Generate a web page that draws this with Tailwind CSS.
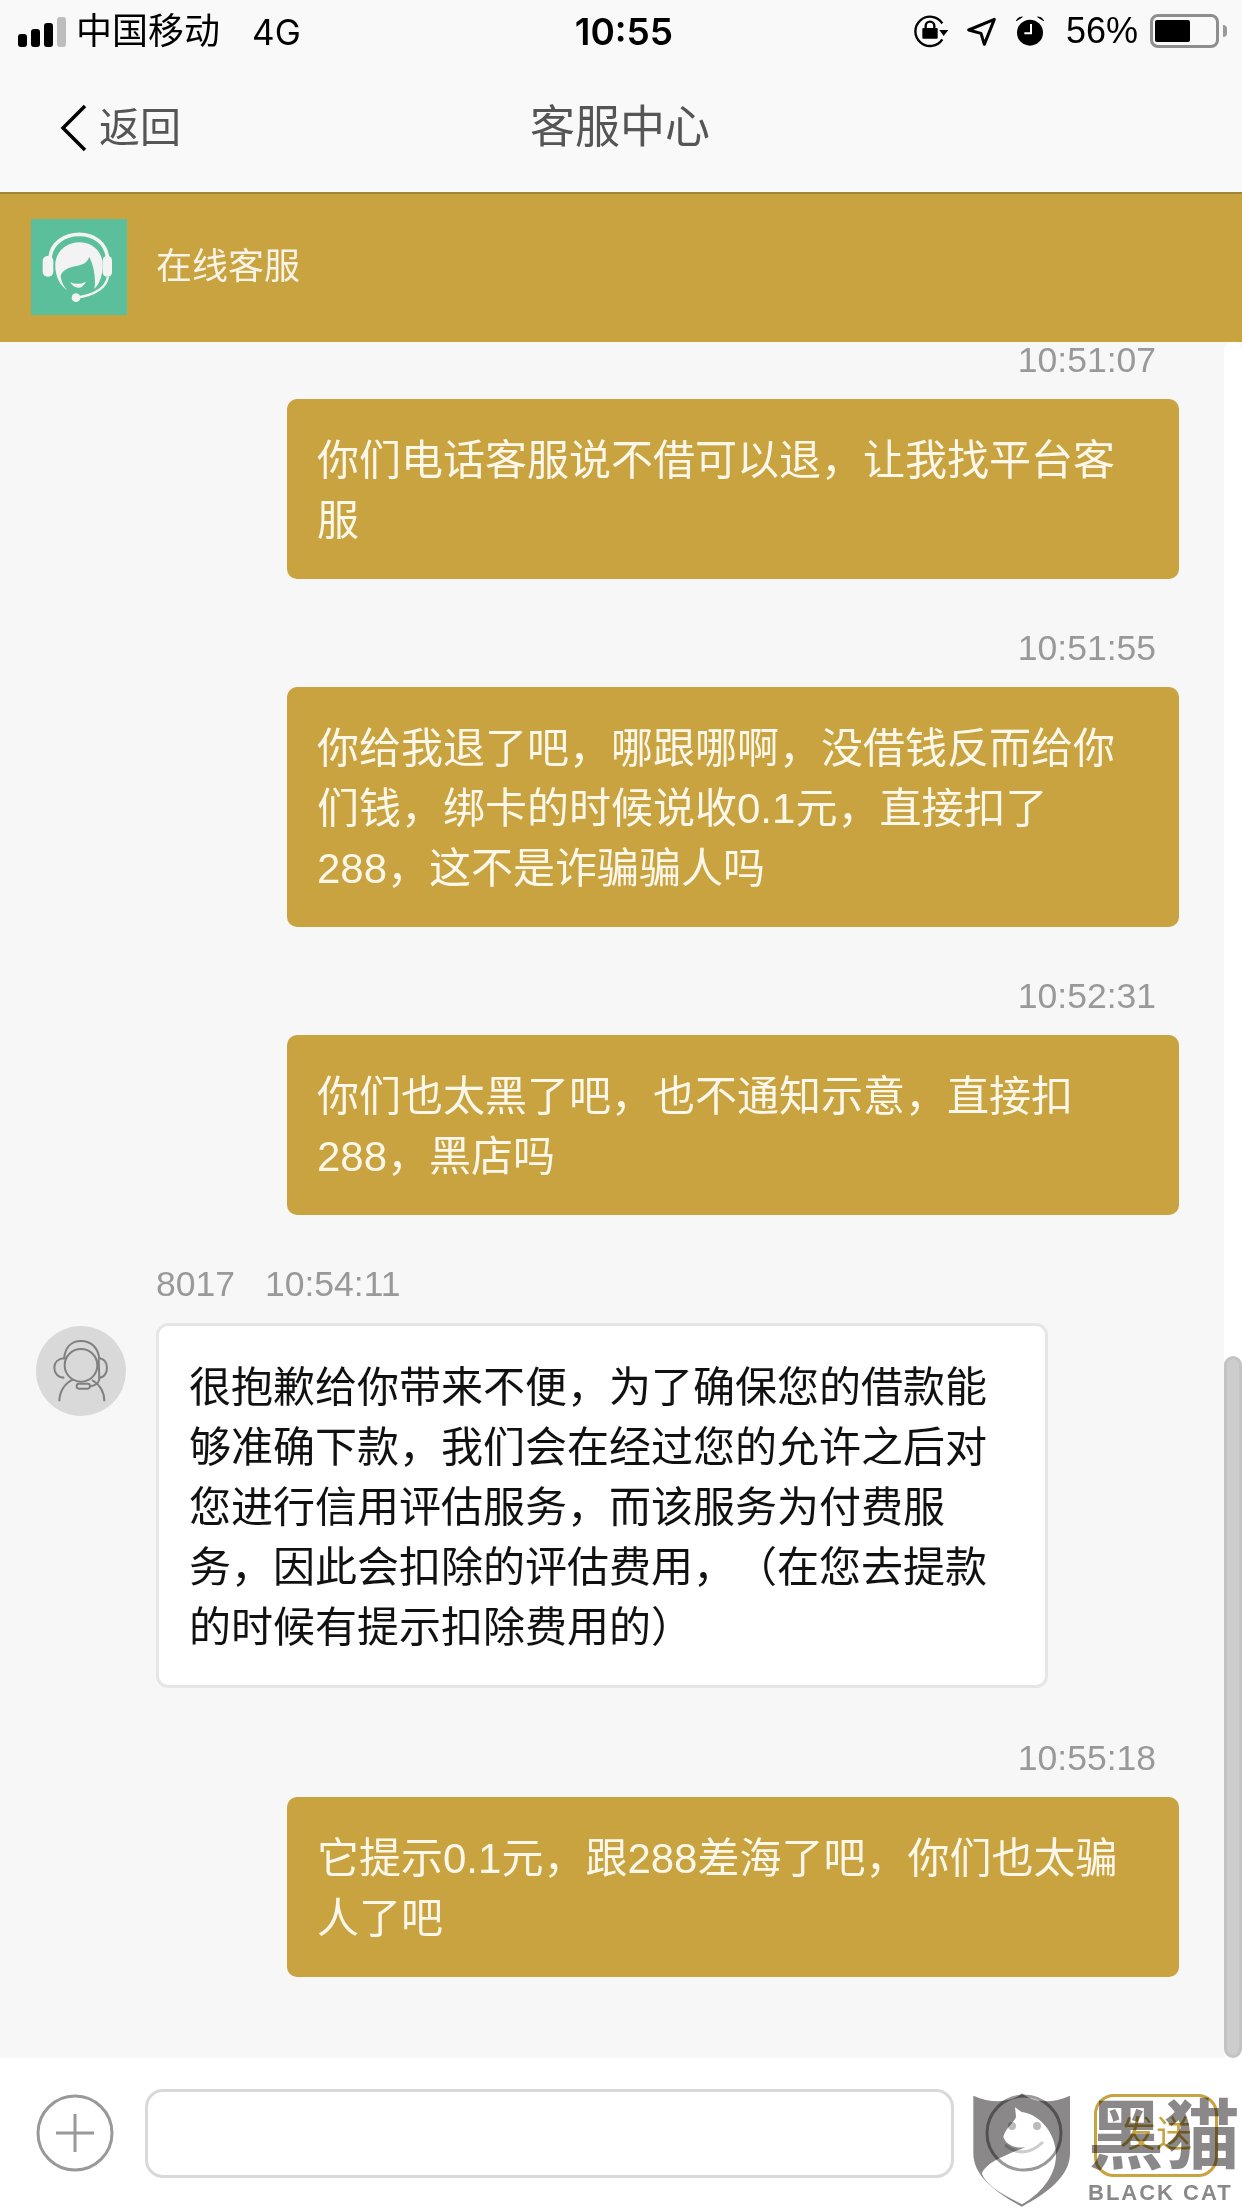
<!DOCTYPE html>
<html lang="zh">
<head>
  <meta charset="UTF-8">
  <meta name="viewport" content="width=device-width, initial-scale=1.0">
  <title>客服中心</title>
  <script src="https://cdn.jsdelivr.net/npm/@tailwindcss/browser@4"></script>
</head>
<body class="m-0 bg-white font-['Liberation_Sans','Noto_Sans_CJK_SC',sans-serif] [text-spacing-trim:space-all]">
  <div class="relative flex h-[2208px] w-[1242px] flex-col overflow-hidden">

    <!-- status bar -->
    <div class="flex h-[60px] shrink-0 items-center bg-[#f9f9f9] pl-[18px] pr-[15px] pt-[2px] text-black">
      <div class="flex h-[32px] w-[48px] items-end gap-[4px]">
        <span class="h-[13px] w-[9px] rounded-[3px] bg-black"></span>
        <span class="h-[18px] w-[9px] rounded-[3px] bg-black"></span>
        <span class="h-[24px] w-[9px] rounded-[3px] bg-black"></span>
        <span class="h-[30px] w-[9px] rounded-[3px] bg-[#bdbdbd]"></span>
      </div>
      <span class="ml-[10px] pt-[1px] text-[36px] leading-[40px]">中国移动</span>
      <span class="ml-[32px] pt-[1px] font-['Inter','Noto_Sans_CJK_SC',sans-serif] text-[35px] leading-[40px]">4G</span>
      <span class="ml-[274px] pt-[1px] font-['Inter',sans-serif] text-[37px] font-semibold leading-[40px]">10:55</span>
      <div class="ml-auto flex items-center">
        <svg class="h-[50px] w-[150px]" viewBox="0 0 450 150" fill="none">
          <path d="M112 52 A44 44 0 1 0 112 100" stroke="#000" stroke-width="7"/>
          <path d="M103 72 L130 72 L116 90 Z" fill="#000"/>
          <rect x="52" y="66" width="46" height="32" rx="3" fill="#000"/>
          <path d="M62 68 V60 A13 13 0 0 1 88 60 V68" stroke="#000" stroke-width="7"/>
          <path d="M268 40 L191 72 L228 82 L238 115 Z" stroke="#000" stroke-width="9" stroke-linejoin="round"/>
          <circle cx="375" cy="80" r="39" fill="#000"/>
          <path d="M378 54 V82 H358" stroke="#fff" stroke-width="6"/>
          <path d="M334 44 Q340 32 352 33 Z" fill="#000" stroke="#000" stroke-width="3"/>
          <path d="M416 44 Q410 32 398 33 Z" fill="#000" stroke="#000" stroke-width="3"/>
        </svg>
        <span class="ml-[11px] text-[36px] leading-[40px]">56%</span>
        <div class="ml-[12px] flex items-center">
          <div class="flex h-[34px] w-[69px] items-center rounded-[8px] border-[3px] border-[#8e8e8e] pl-[2px]">
            <div class="h-[22px] w-[35px] rounded-[2px] bg-black"></div>
          </div>
          <div class="ml-[4px] h-[12px] w-[4px] rounded-r-full bg-[#9a9a9a]"></div>
        </div>
      </div>
    </div>

    <!-- nav -->
    <div class="grid h-[132px] shrink-0 grid-cols-[1fr_auto_1fr] items-center bg-[#f9f9f9] pt-[3px]">
      <div class="flex items-center pl-[60px]">
        <svg class="h-[48px] w-[28px]" viewBox="0 0 28 48" fill="none">
          <path d="M25 2 L3 24 L25 46" stroke="#000" stroke-width="3.5"/>
        </svg>
        <span class="ml-[11px] text-[41px] leading-[50px] text-[#555]">返回</span>
      </div>
      <div class="pr-[2px] text-[45px] leading-[50px] text-[#555]">客服中心</div>
      <div></div>
    </div>

    <!-- service header -->
    <div class="flex h-[150px] shrink-0 items-center border-t-2 border-[#a08536] bg-[#c8a340] pb-[2px] pl-[31px]">
      <div class="flex h-[96px] w-[96px] items-center justify-center bg-[#5bbf9b]">
        <svg class="h-[96px] w-[96px]" viewBox="15 22 288 288" fill="none">
          <path d="M72 140 C75 95 115 68 160 68 C205 68 240 95 245 140" stroke="#f3f3f3" stroke-width="11"/>
          <rect x="50" y="133" width="32" height="62" rx="15" fill="#f3f3f3"/>
          <rect x="230" y="133" width="28" height="62" rx="13" fill="#f3f3f3"/>
          <path d="M125 236 C100 222 86 190 88 155 C92 115 125 92 160 92 C200 92 230 120 230 160 C230 190 222 215 205 232 C210 205 205 165 190 135 C182 160 160 160 140 165 C118 170 100 185 105 200 C108 215 115 228 125 236 Z" fill="#f3f3f3"/>
          <path d="M133 212 Q157 222 180 210 Q170 230 155 228 Q140 227 133 212 Z" fill="#f3f3f3"/>
          <path d="M246 195 C240 228 205 250 150 258" stroke="#f3f3f3" stroke-width="7"/>
          <circle cx="150" cy="258" r="13" fill="#f3f3f3"/>
        </svg>
      </div>
      <span class="ml-[29px] text-[36px] leading-[40px] text-[#f7f3e6]">在线客服</span>
    </div>

    <!-- chat list -->
    <div class="relative min-h-0 flex-1 bg-[#f7f7f7]">
      <div class="absolute inset-y-0 right-0 w-[18px] rounded-t-[9px] bg-white">
        <div class="absolute bottom-0 left-0 right-0 top-[1014px] rounded-[9px] border-[3px] border-[#c3c3c3] bg-[#cdcdcd]"></div>
      </div>

      <div class="-mt-[3px] flex flex-col pl-[287px] pr-[63px]">
        <div class="pr-[23px] text-right text-[35.5px] leading-[42px] text-[#999]">10:51:07</div>
        <div class="mt-[18px] rounded-[10px] bg-[#c8a340] px-[30px] pb-[28px] pt-[32px] text-[42px] leading-[60px] text-[#fbf7ea]">
          你们电话客服说不借可以退，让我找平台客<br>服
        </div>

        <div class="mt-[48px] pr-[23px] text-right text-[35.5px] leading-[42px] text-[#999]">10:51:55</div>
        <div class="mt-[18px] rounded-[10px] bg-[#c8a340] px-[30px] pb-[28px] pt-[32px] text-[42px] leading-[60px] text-[#fbf7ea]">
          你给我退了吧，哪跟哪啊，没借钱反而给你<br>们钱，绑卡的时候说收0.1元，直接扣了<br>288，这不是诈骗骗人吗
        </div>

        <div class="mt-[48px] pr-[23px] text-right text-[35.5px] leading-[42px] text-[#999]">10:52:31</div>
        <div class="mt-[18px] rounded-[10px] bg-[#c8a340] px-[30px] pb-[28px] pt-[32px] text-[42px] leading-[60px] text-[#fbf7ea]">
          你们也太黑了吧，也不通知示意，直接扣<br>288，黑店吗
        </div>

        <!-- agent reply -->
        <div class="-ml-[131px] mt-[48px] flex flex-col">
          <div class="flex text-[35.5px] leading-[42px] text-[#999]">
            <span>8017</span>
            <span class="ml-[30px]">10:54:11</span>
          </div>
          <div class="mt-[18px] flex items-start">
            <div class="mt-[3px] -ml-[120px] h-[90px] w-[90px] shrink-0 rounded-full bg-[#d9d9d9]">
              <svg class="h-[90px] w-[90px]" viewBox="0 0 270 270" fill="none" stroke="#808080" stroke-width="6">
                <circle cx="135" cy="118" r="49"/>
                <path d="M84 100 C87 65 105 45 135 45 C165 45 187 65 190 100"/>
                <path d="M85 96 C65 98 55 110 55 125 C55 140 65 155 85 155"/>
                <path d="M186 96 C205 98 213 110 213 125 C213 140 205 155 188 155"/>
                <path d="M188 100 L190 160 C188 172 175 180 162 181"/>
                <rect x="122" y="173" width="40" height="15" rx="7"/>
                <path d="M70 226 C70 195 88 170 112 160"/>
                <path d="M205 226 C205 200 195 178 168 162"/>
              </svg>
            </div>
            <div class="ml-[30px] h-[365px] w-[892px] rounded-[12px] border-[3px] border-[#e6e6e6] bg-white px-[30px] pb-[29px] pt-[32px] text-[42px] leading-[60px] text-[#111]">
              很抱歉给你带来不便，为了确保您的借款能<br>够准确下款，我们会在经过您的允许之后对<br>您进行信用评估服务，而该服务为付费服<br>务，因此会扣除的评估费用，（在您去提款<br>的时候有提示扣除费用的）
            </div>
          </div>
        </div>

        <div class="mt-[49px] pr-[23px] text-right text-[35.5px] leading-[42px] text-[#999]">10:55:18</div>
        <div class="mt-[18px] rounded-[10px] bg-[#c8a340] px-[30px] pb-[28px] pt-[32px] text-[42px] leading-[60px] text-[#fbf7ea]">
          它提示0.1元，跟288差海了吧，你们也太骗<br>人了吧
        </div>
      </div>
    </div>

    <!-- input bar -->
    <div class="flex h-[150px] shrink-0 items-center bg-white pl-[36px]">
      <svg class="h-[78px] w-[78px] shrink-0" viewBox="0 0 78 78" fill="none" stroke="#999" stroke-width="3">
        <circle cx="39" cy="39" r="37"/>
        <path d="M20 39 H58 M39 20 V58"/>
      </svg>
      <div class="ml-[31px] h-[89px] w-[809px] rounded-[18px] border-[3px] border-[#d9d9d9] bg-white"></div>
      <svg class="ml-[31px] h-[78px] w-[78px] shrink-0" viewBox="0 0 78 78" fill="none" stroke="#999" stroke-width="3">
        <circle cx="39" cy="39" r="37"/>
        <circle cx="27" cy="32" r="4" fill="#bbb" stroke="none"/>
        <circle cx="52" cy="32" r="4" fill="#bbb" stroke="none"/>
        <path d="M20 51 Q39 66 58 48" stroke="#ccc"/>
      </svg>
      <div class="ml-[31px] mt-[4px] flex h-[83px] w-[124px] items-center justify-center rounded-[20px] border-[3px] border-[#c8a340] text-[36px] text-[#c8a340]">发送</div>
    </div>

    <!-- watermark over the bar -->
    <svg class="pointer-events-none absolute left-[900px] top-[2030px] h-[178px] w-[342px] mix-blend-multiply" viewBox="0 0 1026 534">
      <path fill-rule="evenodd" fill="#8a8889" d="M366 190 C340 215 280 225 220 197 L220 370 C220 440 290 490 366 530 C440 490 510 440 510 370 L510 197 C450 225 395 215 366 190 Z M345 232 L365 246 C410 250 465 300 468 370 C470 420 440 480 366 523 C310 495 260 470 245 430 C260 395 320 375 378 350 C345 360 315 340 310 320 C315 295 345 275 348 260 Z"/>
    </svg>
    <div class="pointer-events-none absolute left-[1088px] top-[2092px] flex h-[90px] w-[156px] items-center text-[76px] font-bold leading-[90px] text-[#8a8889] mix-blend-multiply">黑猫</div>
    <div class="pointer-events-none absolute left-[1088px] top-[2181px] text-[22px] font-bold leading-[24px] tracking-[2px] text-[#8a8889]">BLACK CAT</div>
  </div>
</body>
</html>
